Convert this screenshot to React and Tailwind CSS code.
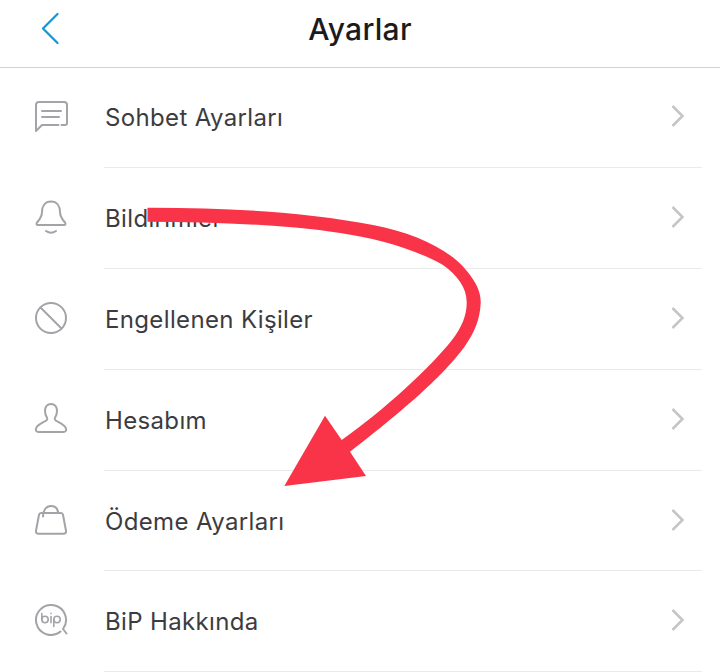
import React from 'react';

const strokeProps = {
    fill: 'none',
    stroke: 'currentColor',
    strokeWidth: 2,
    strokeLinecap: 'round',
    strokeLinejoin: 'round',
};

const ChatIcon = () => (
    <svg width="34" height="34" viewBox="0 0 34 34" {...strokeProps}>
        <path d="M27.500 26H31c1.200 0 2-.8 2-2V6c0-1.700-1-3-3-3H5C3 3 2 4.300 2 6v26l6-6h16.500" />
        <path d="M8 12h19M8 18h17" />
    </svg>
);

const BellIcon = () => (
    <svg width="34" height="34" viewBox="0 0 34 34" {...strokeProps}>
        <path d="M17 1.500C11 1.500 8 6 8 12c0 5-2.500 7.500-5 10.500-1 1.500-.5 2.500 1 2.500h26c1.500 0 2-1 1-2.500-2.500-3-5-5.500-5-10.500C26 6 23 1.500 17 1.500z" />
        <path d="M12 31c3 2 7 2 10 0" />
    </svg>
);

const BlockIcon = () => (
    <svg width="34" height="34" viewBox="0 0 34 34" {...strokeProps}>
        <circle cx="17" cy="17" r="15" />
        <path d="M6.500 6.500l21 21" />
    </svg>
);

const UserIcon = () => (
    <svg width="34" height="34" viewBox="0 0 34 34" {...strokeProps}>
        <path d="M17 2c-3.800 0-6 3-6 7 0 3.200 1 5.200 2 6.800.8 1.300-.2 2.500-1.500 3.200-3.500 2-8 3.500-9.500 7.500-.7 2 .5 3.500 2.500 3.500h25c2 0 3.200-1.500 2.500-3.500-1.500-4-6-5.500-9.500-7.500-1.300-.7-2.300-1.900-1.500-3.200 1-1.600 2-3.600 2-6.800 0-4-2.200-7-6-7z" />
    </svg>
);

const BagIcon = () => (
    <svg width="34" height="34" viewBox="0 -1.500 34 34" {...strokeProps}>
        <path d="M8 8.500h19c1 0 1.800.7 2 1.700l3 16c.4 2-.8 3-2.500 3H4.500c-1.700 0-2.900-1-2.500-3l3-16c.2-1 1-1.700 2-1.700z" />
        <path d="M9 12c0-6 3-10.500 8-10.500 4 0 6.500 2.500 7 6" />
    </svg>
);

// BiP logo: ring with a small tail and the rounded lowercase mark inside
const BipIcon = () => (
    <svg width="34" height="34" viewBox="0 0 34 34" fill="none" stroke="currentColor" strokeLinecap="round" strokeLinejoin="round">
        <path strokeWidth="2" d="M26.500 28.600A15 15 0 1 1 29 26l3.500 4.500" />
        <circle cx="11" cy="16.500" r="3.200" strokeWidth="1.600" />
        <path strokeWidth="1.600" d="M7.800 10.500v6M17 13.500v6.200M17 10.400v.2" />
        <circle cx="23" cy="16.500" r="3.200" strokeWidth="1.600" />
        <path strokeWidth="1.600" d="M19.800 16.500v7" />
    </svg>
);

const rows = [
    { label: 'Sohbet Ayarları', icon: <ChatIcon /> },
    { label: 'Bildirimler', icon: <BellIcon /> },
    { label: 'Engellenen Kişiler', icon: <BlockIcon /> },
    { label: 'Hesabım', icon: <UserIcon /> },
    { label: 'Ödeme Ayarları', icon: <BagIcon /> },
    { label: 'BiP Hakkında', icon: <BipIcon /> },
];

const App = () => {
    return (
        <div className="relative w-[720px] h-[672px] overflow-hidden bg-white font-['Inter',sans-serif]">
            {/* Header */}
            <div className="relative h-[68px] flex items-center justify-center border-b border-[#d2d2d4]">
                <svg className="absolute left-[41px] top-[13px] text-[#1296d4]" width="19" height="32" viewBox="0 0 19 32" fill="none" stroke="currentColor" strokeWidth="2.200" strokeLinecap="round" strokeLinejoin="round">
                    <path d="M16.500 1L2 15.500 16.500 30" />
                </svg>
                <h1 className="text-[30px] font-medium tracking-[0.3px] text-[#1b1b1d] -mt-[8px]">Ayarlar</h1>
            </div>

            {/* Rows */}
            <div className="flex flex-col -mt-px">
                {rows.map((row) => (
                    <div key={row.label} className="h-[100.9px] flex items-stretch">
                        <div className="w-[104px] flex items-center justify-center pr-[3px] pb-[3px] text-[#a3a4a8]">
                            {row.icon}
                        </div>
                        <div className="w-[598px] flex items-center justify-between border-b border-[#eaeaea]">
                            <span className="pl-px mt-[2px] text-[24px] tracking-[0.35px] text-[#3c3c40]">{row.label}</span>
                            <svg className="mr-[16px] mb-[2px] text-[#c5c5c7]" width="16" height="24" viewBox="0 0 16 24" fill="none" stroke="currentColor" strokeWidth="2.500">
                                <path d="M2.500 2l10 10-10 10" />
                            </svg>
                        </div>
                    </div>
                ))}
            </div>

            {/* Red annotation arrow */}
            <svg className="absolute inset-0" width="720" height="672" viewBox="0 0 720 672">
                <path
                    fill="#f93348"
                    d="M147.500 207.700C225 207.500 305 212 373 225C415 233 450 250 466 270C477 283 481 293 480.700 303C480 320 474 333 465 346C450 367 420 398 350 451.700L366 476L284.300 486L325 415.700L341.700 440C384 410 430 368 452 340C462 327 466.700 315 466.700 303C467 288 458 276 443 265C415 249 375 238 340 233C280 224 210 222 147.500 221.700Z"
                />
            </svg>
        </div>
    );
};

export default App;
